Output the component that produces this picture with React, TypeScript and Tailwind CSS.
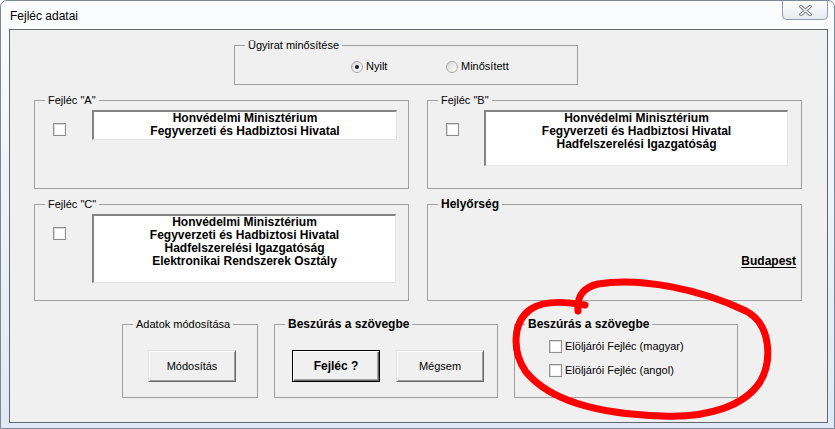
import React from 'react';

type GroupProps = {
  label: string;
  bold?: boolean;
  className: string;
  children?: React.ReactNode;
};

function Group({ label, bold, className, children }: GroupProps) {
  return (
    <div className={`relative border border-[#a0a0a0] ${className}`}>
      <span
        className={
          bold
            ? 'absolute -top-[8px] left-[10px] bg-[#f0f0f0] px-[3px] text-[12px] leading-[14px] font-bold'
            : 'absolute -top-[8px] left-[10px] bg-[#f0f0f0] px-[3px] text-[11px] leading-[14px]'
        }
      >
        {label}
      </span>
      {children}
    </div>
  );
}

function CheckBox() {
  return (
    <div className="w-[13px] h-[13px] shrink-0 border border-[#8e8f8f] bg-white shadow-[inset_1px_1px_0_#dcdcdc,inset_-1px_-1px_0_#f4f4f4]" />
  );
}

function Radio({ checked }: { checked?: boolean }) {
  return (
    <div className="w-[12px] h-[12px] shrink-0 rounded-full border border-[#a7a7a7] bg-gradient-to-br from-[#d8d8d8] to-white flex items-center justify-center">
      {checked && <div className="w-[4px] h-[4px] rounded-full bg-[#1a1a1a]" />}
    </div>
  );
}

type HeaderProps = {
  label: string;
  lines: string[];
  boxClass: string;
  gapClass: string;
};

function HeaderGroup({ label, lines, boxClass, gapClass }: HeaderProps) {
  return (
    <Group label={label} className="w-[375px] h-full">
      <div className="flex items-start pl-[18px] pt-[9px]">
        <div className="mt-[13px]">
          <CheckBox />
        </div>
        <div
          className={`${gapClass} ${boxClass} bg-white border-t-2 border-l-2 border-r border-b border-t-[#848484] border-l-[#848484] border-r-[#e3e3e3] border-b-[#e3e3e3] text-center font-bold text-[12px] leading-[13px] text-black`}
        >
          {lines.map((l) => (
            <div key={l}>{l}</div>
          ))}
        </div>
      </div>
    </Group>
  );
}

function Button({ label, primary }: { label: string; primary?: boolean }) {
  return (
    <div
      className={
        primary
          ? 'w-[88px] h-[32px] flex items-center justify-center bg-[#f0f0f0] border border-black shadow-[inset_1px_1px_0_#ffffff,inset_-1px_-1px_0_#696969,inset_-2px_-2px_0_#a0a0a0] text-[12px] font-bold'
          : 'w-[88px] h-[32px] flex items-center justify-center bg-[#f0f0f0] border border-t-[#e3e3e3] border-l-[#e3e3e3] border-r-[#696969] border-b-[#696969] shadow-[inset_1px_1px_0_#ffffff,inset_-1px_-1px_0_#a0a0a0] text-[11px]'
      }
    >
      {label}
    </div>
  );
}

export default function App() {
  return (
    <div className="relative w-[835px] h-[429px] overflow-hidden font-['Liberation_Sans',Arial,sans-serif] text-black bg-[linear-gradient(to_bottom,#fbfcfe,#dfe8f4)] border border-[#7d8896] rounded-t-[7px]">
      {/* title bar */}
      <div className="h-[28px] flex items-start justify-between">
        <div className="pl-[9px] pt-[8px] text-[12px] leading-[14px]">Fejléc adatai</div>
        <div className="mr-[6px] w-[46px] h-[19px] border border-t-0 border-[#8d99a8] rounded-b-[5px] bg-gradient-to-b from-[#fdfdfd] to-[#e7ecf2] flex items-center justify-center">
          <svg width="13" height="11" viewBox="0 0 13 11">
            <path d="M2 1.5 L11 9.5 M11 1.5 L2 9.5" stroke="#7d7d7d" strokeWidth="3.4" strokeLinecap="square" />
            <path d="M2 1.5 L11 9.5 M11 1.5 L2 9.5" stroke="#ffffff" strokeWidth="1.4" strokeLinecap="square" />
          </svg>
        </div>
      </div>

      {/* client area */}
      <div className="ml-[8px] mr-[6px] h-[394px] border border-[#5f6670] bg-[#f0f0f0] flex flex-col">
        <Group label="Ügyirat minősítése" className="ml-[224px] mt-[15px] w-[344px] h-[40px]">
          <div className="flex items-center pt-[14px] pl-[116px] text-[11px] leading-[13px]">
            <div className="w-[95px] flex items-center gap-[3px]">
              <Radio checked />
              <span>Nyilt</span>
            </div>
            <div className="flex items-center gap-[3px]">
              <Radio />
              <span>Minősített</span>
            </div>
          </div>
        </Group>

        <div className="mt-[15px] ml-[24px] h-[89px] flex gap-[18px]">
          <HeaderGroup
            label={'Fejléc "A"'}
            lines={['Honvédelmi Minisztérium', 'Fegyverzeti és Hadbiztosi Hivatal']}
            boxClass="w-[305px] h-[30px]"
            gapClass="ml-[26px]"
          />
          <HeaderGroup
            label={'Fejléc "B"'}
            lines={['Honvédelmi Minisztérium', 'Fegyverzeti és Hadbiztosi Hivatal', 'Hadfelszerelési Igazgatóság']}
            boxClass="w-[304px] h-[56px]"
            gapClass="ml-[25px]"
          />
        </div>

        <div className="mt-[15px] ml-[24px] h-[97px] flex gap-[18px]">
          <HeaderGroup
            label={'Fejléc "C"'}
            lines={[
              'Honvédelmi Minisztérium',
              'Fegyverzeti és Hadbiztosi Hivatal',
              'Hadfelszerelési Igazgatóság',
              'Elektronikai Rendszerek Osztály',
            ]}
            boxClass="w-[304px] h-[69px]"
            gapClass="ml-[26px]"
          />
          <Group label="Helyőrség" bold className="w-[375px] h-full">
            <div className="flex justify-end pt-[49px] pr-[5px]">
              <span className="text-[12px] leading-[14px] font-bold underline underline-offset-2">Budapest</span>
            </div>
          </Group>
        </div>

        <div className="mt-[23px] ml-[112px] h-[74px] flex gap-[16px]">
          <Group label="Adatok módosítása" className="w-[136px] h-full">
            <div className="pl-[25px] pt-[25px]">
              <Button label="Módosítás" />
            </div>
          </Group>
          <Group label="Beszúrás a szövegbe" bold className="w-[224px] h-full">
            <div className="pl-[17px] pt-[25px] flex gap-[16px]">
              <Button label="Fejléc ?" primary />
              <Button label="Mégsem" />
            </div>
          </Group>
          <Group label="Beszúrás a szövegbe" bold className="w-[224px] h-full">
            <div className="pl-[34px] pt-[15px] flex flex-col gap-[11px] text-[11px] leading-[13px]">
              <div className="flex items-center gap-[3px]">
                <CheckBox />
                <span>Elöljárói Fejléc (magyar)</span>
              </div>
              <div className="flex items-center gap-[3px]">
                <CheckBox />
                <span>Elöljárói Fejléc (angol)</span>
              </div>
            </div>
          </Group>
        </div>
      </div>

      {/* hand-drawn red annotation */}
      <svg className="absolute left-[-1px] top-[-1px] pointer-events-none" width="835" height="429" viewBox="0 0 835 429">
        <path
          d="M578 311 C577 298 581 288 598 284 C640 277 700 289 746 311 C772 325 772 362 760 382 C745 405 710 418 662 416 C600 414 550 401 526 372 C512 352 512 322 531 309 C544 300 568 302 585 305"
          fill="none"
          stroke="#ff0000"
          strokeWidth="7"
          strokeLinecap="round"
          strokeLinejoin="round"
        />
      </svg>
    </div>
  );
}
